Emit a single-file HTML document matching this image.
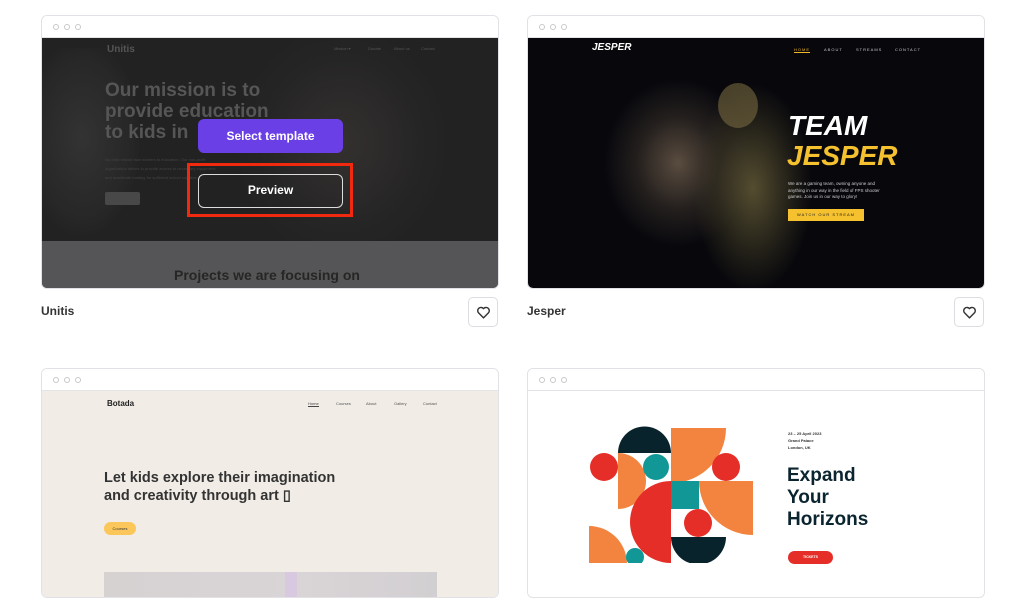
<!DOCTYPE html>
<html><head><meta charset="utf-8"><style>
*{margin:0;padding:0;box-sizing:border-box}
body{width:1024px;height:589px;background:#fff;position:relative;overflow:hidden;font-family:"Liberation Sans",sans-serif}
.card{position:absolute;border:1px solid #e2e2e6;border-radius:6px;overflow:hidden;background:#fff}
.bar{position:absolute;left:0;top:0;right:0;height:22px;border-bottom:1px solid #e4e4e8;background:#fff}
.dot{position:absolute;top:8px;width:6px;height:6px;border:1px solid #c8c8cc;border-radius:50%}
.cont{position:absolute;left:0;top:22px;right:0;bottom:0}
.t{position:absolute;white-space:nowrap}
.title{position:absolute;font-size:12px;font-weight:bold;color:#333}
.heart{position:absolute;width:30px;height:30px;border:1px solid #dcdce2;border-radius:5px;background:#fff}
.heart svg{position:absolute;left:7px;top:8px}
</style></head><body>

<!-- Card 1 Unitis -->
<div class="card" style="left:41px;top:15px;width:458px;height:274px">
 <div class="bar"><div class="dot" style="left:11px"></div><div class="dot" style="left:22px"></div><div class="dot" style="left:33px"></div></div>
 <div class="cont" style="background:#242424">
  <div style="position:absolute;left:0;top:0;width:457px;height:203px;background:radial-gradient(ellipse 110px 120px at 300px 105px,#343030,#262525 70%,#222);"></div>
  <div style="position:absolute;left:0;top:10px;width:130px;height:190px;background:radial-gradient(ellipse 60px 100px at 40px 90px,#333,#272727 80%,transparent)"></div>
  <div class="t" style="left:65px;top:6px;font-size:10px;font-weight:bold;color:#555">Unitis</div>
  <div class="t" style="left:292px;top:8px;font-size:4px;color:#555">Mission ▾</div>
  <div class="t" style="left:326px;top:8px;font-size:4px;color:#555">Donate</div>
  <div class="t" style="left:352px;top:8px;font-size:4px;color:#555">About us</div>
  <div class="t" style="left:379px;top:8px;font-size:4px;color:#555">Contact</div>
  <div class="t" style="left:63px;top:42px;font-size:19px;line-height:21px;font-weight:bold;color:#565656">Our mission is to<br>provide education<br>to kids in</div>
  <div class="t" style="left:63px;top:117px;font-size:4px;line-height:9px;color:#444">No child should face barriers to education. Our non-profit<br>organization strives to provide access to necessary equipment,<br>and accelerate funding for sufficient school supplies.</div>
  <div style="position:absolute;left:63px;top:154px;width:35px;height:13px;background:#484848;border-radius:2px"></div>
  <div style="position:absolute;left:0;top:203px;width:457px;height:50px;background:#555557"></div>
  <div class="t" style="left:132px;top:229px;font-size:14px;font-weight:bold;color:#262626">Projects we are focusing on</div>
  <div style="position:absolute;left:156px;top:81px;width:145px;height:34px;background:#6b3fe6;border-radius:6px;color:#fff;font-size:12px;font-weight:bold;text-align:center;line-height:34px">Select template</div>
  <div style="position:absolute;left:145px;top:125px;width:166px;height:54px;border:3px solid #f0290f"></div>
  <div style="position:absolute;left:156px;top:136px;width:145px;height:34px;border:1.5px solid #ddd;border-radius:6px;color:#fff;font-size:12px;font-weight:bold;text-align:center;line-height:31px">Preview</div>
 </div>
</div>
<div class="title" style="left:41px;top:304px">Unitis</div>
<div class="heart" style="left:468px;top:297px"><svg width="15" height="13" viewBox="0 0 24 22"><path d="M12 20 L3.5 11.5 A5 5 0 0 1 12 4.5 A5 5 0 0 1 20.5 11.5 Z" fill="none" stroke="#333" stroke-width="2.4" stroke-linejoin="round"/></svg></div>

<!-- Card 2 Jesper -->
<div class="card" style="left:527px;top:15px;width:458px;height:274px">
 <div class="bar"><div class="dot" style="left:11px"></div><div class="dot" style="left:22px"></div><div class="dot" style="left:33px"></div></div>
 <div class="cont" style="background:#07070c">
  <div style="position:absolute;left:55px;top:40px;width:180px;height:200px;background:radial-gradient(ellipse 75px 85px at 95px 85px,rgba(125,105,85,.7),rgba(70,60,50,.45) 55%,transparent 100%)"></div>
  <div style="position:absolute;left:150px;top:35px;width:150px;height:215px;background:radial-gradient(ellipse 60px 105px at 75px 115px,rgba(110,100,60,.75),rgba(60,55,35,.55) 60%,transparent)"></div>
  <div style="position:absolute;left:190px;top:45px;width:40px;height:45px;border-radius:50%;background:rgba(120,105,65,.6)"></div>
  <div class="t" style="left:64px;top:4px;font-size:10px;font-weight:bold;font-style:italic;color:#fff">JESPER</div>
  <div class="t" style="left:266px;top:9px;font-size:4px;letter-spacing:1px;color:#f2b82a;border-bottom:1px solid #f2b82a">HOME</div>
  <div class="t" style="left:296px;top:9px;font-size:4px;letter-spacing:1px;color:#ccc">ABOUT</div>
  <div class="t" style="left:328px;top:9px;font-size:4px;letter-spacing:1px;color:#ccc">STREAMS</div>
  <div class="t" style="left:367px;top:9px;font-size:4px;letter-spacing:1px;color:#ccc">CONTACT</div>
  <div class="t" style="left:260px;top:73px;font-size:28px;line-height:30px;font-weight:bold;font-style:italic;color:#fff">TEAM</div>
  <div class="t" style="left:259px;top:103px;font-size:28px;line-height:30px;font-weight:bold;font-style:italic;color:#f5c12e">JESPER</div>
  <div class="t" style="left:260px;top:143px;font-size:4.5px;line-height:6.5px;color:#ccc">We are a gaming team, owning anyone and<br>anything in our way in the field of FPS shooter<br>games. Join us in our way to glory!</div>
  <div style="position:absolute;left:260px;top:171px;width:76px;height:12px;background:#f5c12e;font-size:4px;letter-spacing:1px;text-align:center;line-height:12px;color:#222">WATCH OUR STREAM</div>
 </div>
</div>
<div class="title" style="left:527px;top:304px">Jesper</div>
<div class="heart" style="left:954px;top:297px"><svg width="15" height="13" viewBox="0 0 24 22"><path d="M12 20 L3.5 11.5 A5 5 0 0 1 12 4.5 A5 5 0 0 1 20.5 11.5 Z" fill="none" stroke="#333" stroke-width="2.4" stroke-linejoin="round"/></svg></div>

<!-- Card 3 Botada -->
<div class="card" style="left:41px;top:368px;width:458px;height:230px">
 <div class="bar"><div class="dot" style="left:11px"></div><div class="dot" style="left:22px"></div><div class="dot" style="left:33px"></div></div>
 <div class="cont" style="background:#f1ece6">
  <div class="t" style="left:65px;top:8px;font-size:8px;font-weight:bold;color:#222">Botada</div>
  <div class="t" style="left:266px;top:10px;font-size:4px;color:#444;border-bottom:1px solid #444">Home</div>
  <div class="t" style="left:294px;top:10px;font-size:4px;color:#555">Courses</div>
  <div class="t" style="left:324px;top:10px;font-size:4px;color:#555">About</div>
  <div class="t" style="left:352px;top:10px;font-size:4px;color:#555">Gallery</div>
  <div class="t" style="left:381px;top:10px;font-size:4px;color:#555">Contact</div>
  <div class="t" style="left:62px;top:78px;font-size:14.5px;line-height:18px;font-weight:bold;color:#333">Let kids explore their imagination<br>and creativity through art ▯</div>
  <div style="position:absolute;left:62px;top:131px;width:32px;height:13px;border-radius:7px;background:#fcc75a;font-size:4px;text-align:center;line-height:13px;color:#333">Courses</div>
  <div style="position:absolute;left:62px;top:181px;width:333px;height:30px;background:linear-gradient(90deg,#d6d2d2,#d9d4d6 60%,#d2cfd2)"></div>
  <div style="position:absolute;left:243px;top:181px;width:12px;height:30px;background:#d8c8e0"></div>
 </div>
</div>

<!-- Card 4 Expand -->
<div class="card" style="left:527px;top:368px;width:458px;height:230px">
 <div class="bar"><div class="dot" style="left:11px"></div><div class="dot" style="left:22px"></div><div class="dot" style="left:33px"></div></div>
 <div class="cont" style="background:#fff">
  <div class="t" style="left:260px;top:39px;font-size:4px;line-height:7px;color:#333;font-weight:bold">23 – 25 April 2023<br>Grand Palace<br>London, UK</div>
  <div class="t" style="left:259px;top:74px;font-size:19px;line-height:22px;font-weight:bold;color:#0b2530">Expand<br>Your<br>Horizons</div>
  <div style="position:absolute;left:260px;top:160px;width:45px;height:13px;border-radius:7px;background:#e52e28;font-size:3.5px;text-align:center;line-height:13px;color:#fff;font-weight:bold">TICKETS</div>
 </div>
</div>
<svg style="position:absolute;left:0;top:0" width="1024" height="589" viewBox="0 0 1024 589">
 <defs><clipPath id="c"><rect x="585" y="425" width="175" height="138"/></clipPath></defs>
 <g clip-path="url(#c)">
  <path d="M618,453 A26.5,26.5 0 0 1 671,453 Z" fill="#08232b"/>
  <path d="M671,428 L726,428 A55,55 0 0 1 671,483 Z" fill="#f3843f"/>
  <circle cx="604" cy="467" r="14" fill="#e52e28"/>
  <path d="M618,453 A28,28 0 0 1 618,509 Z" fill="#f3843f"/>
  <circle cx="656" cy="467" r="13" fill="#119896"/>
  <circle cx="726" cy="467" r="14" fill="#e52e28"/>
  <rect x="671" y="481" width="28" height="28" fill="#119896"/>
  <path d="M699,481 L753,481 L753,535 A54,54 0 0 1 699,481 Z" fill="#f3843f"/>
  <path d="M671,481 A41,41 0 0 0 671,563 Z" fill="#e52e28"/>
  <circle cx="698" cy="523" r="14" fill="#e52e28"/>
  <path d="M671,537 L726,537 A27.5,27.5 0 0 1 671,537 Z" fill="#08232b"/>
  <path d="M589,526 A38,38 0 0 1 627,563 L589,563 Z" fill="#f3843f"/>
  <circle cx="635" cy="557" r="9" fill="#119896"/>
 </g>
</svg>
</body></html>
